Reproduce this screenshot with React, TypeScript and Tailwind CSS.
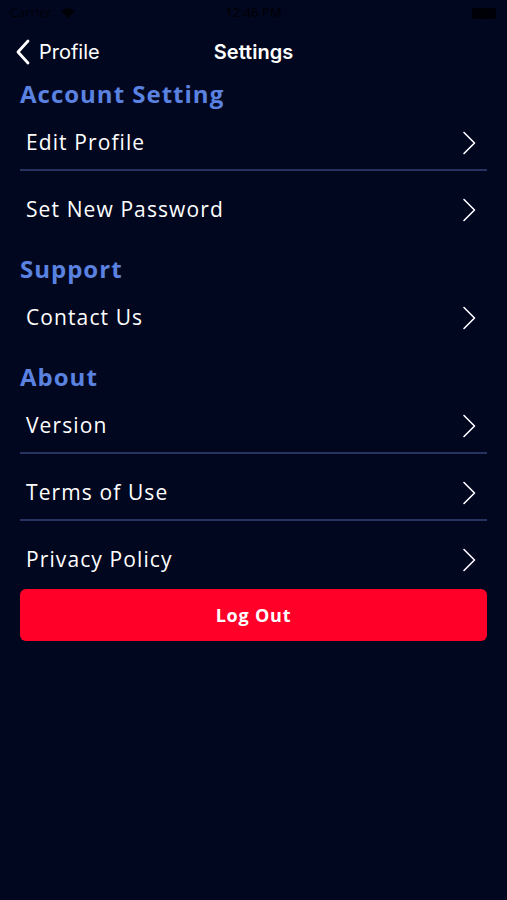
import React from "react";

const Chevron = () => (
  <svg width="16" height="24" viewBox="0 0 16 24" fill="none" className="shrink-0">
    <path d="M3 1.5 L13.5 12 L3 22.5" stroke="white" strokeWidth="1.6" strokeLinecap="round" strokeLinejoin="round" />
  </svg>
);

const Row = ({ label, divider }: { label: string; divider?: boolean }) => (
  <>
    <div className="h-[54px] flex items-center justify-between pl-[6px] pr-[10px] pt-px">
      <span className="text-[21px] text-white tracking-[1.1px]">{label}</span>
      <Chevron />
    </div>
    {divider && <div className="h-[2px] bg-[#263260] mb-[11px]" />}
  </>
);

const Header = ({ label, first }: { label: string; first?: boolean }) => (
  <div className={`h-8 flex items-center text-[24px] font-bold tracking-[1px] text-[#5a82e0] ${first ? "" : "mt-[17px]"} mb-[5px]`}>
    {label}
  </div>
);

export default function App() {
  return (
    <div
      className="w-[507px] h-[900px] bg-[#020720] overflow-hidden"
      style={{ fontFamily: '"Open Sans", "Noto Sans", sans-serif' }}
    >
      {/* status bar */}
      <div className="h-[26px] relative flex items-center px-[10px] text-[13px] text-black/80">
        <span>Carrier</span>
        <svg width="16" height="12" viewBox="0 0 16 12" className="ml-2">
          <path d="M8 11 L1 4 A10 10 0 0 1 15 4 Z" fill="black" opacity="0.8" />
        </svg>
        <span className="absolute left-1/2 -translate-x-1/2 font-semibold">12:46 PM</span>
        <div className="ml-auto mr-[1px] w-[24px] h-[11px] rounded-[3px] bg-black/80" />
      </div>
      {/* nav */}
      <div className="h-[52px] relative flex items-center px-[15px]" style={{ fontFamily: '"Inter", "Noto Sans", sans-serif' }}>
        <svg width="16" height="26" viewBox="0 0 16 26" fill="none">
          <path d="M13 2 L3 13 L13 24" stroke="white" strokeWidth="2.8" strokeLinecap="round" strokeLinejoin="round" />
        </svg>
        <span className="ml-[8px] text-[20px] text-white">Profile</span>
        <span className="absolute left-1/2 -translate-x-1/2 text-[20px] font-semibold text-white">Settings</span>
      </div>
      {/* content */}
      <div className="px-5">
        <Header label="Account Setting" first />
        <Row label="Edit Profile" divider />
        <Row label="Set New Password" />
        <Header label="Support" />
        <Row label="Contact Us" />
        <Header label="About" />
        <Row label="Version" divider />
        <Row label="Terms of Use" divider />
        <Row label="Privacy Policy" />
        <button className="mt-[3px] w-full h-[52px] rounded-[6px] bg-[#ff0028] text-white text-[18px] font-bold tracking-[0.8px] flex items-center justify-center">
          Log Out
        </button>
      </div>
    </div>
  );
}
